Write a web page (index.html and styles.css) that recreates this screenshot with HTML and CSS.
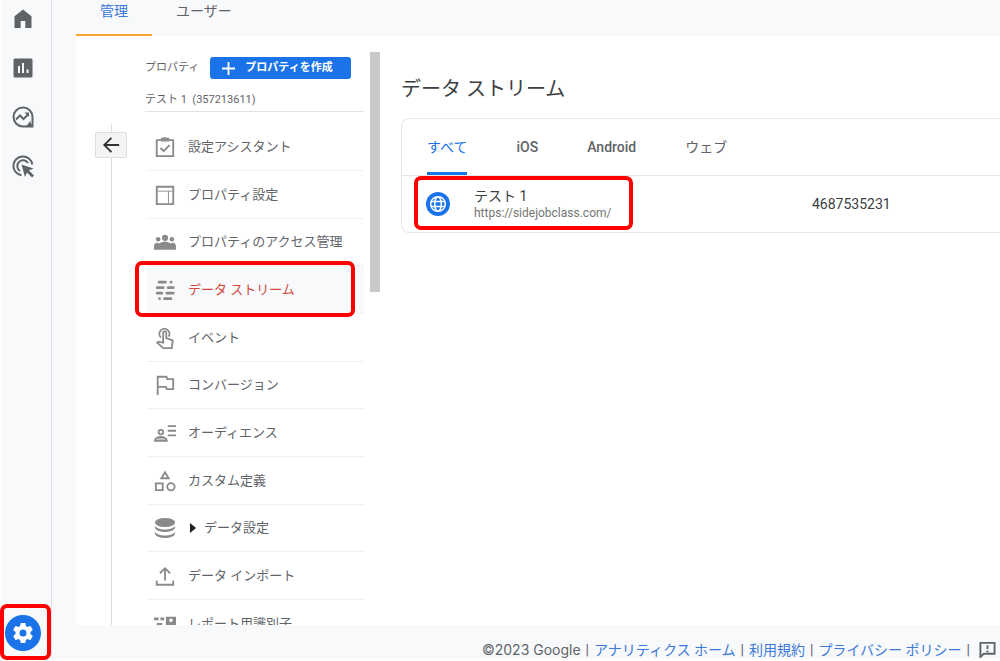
FILE: index.html
```html
<!DOCTYPE html>
<html lang="ja">
<head>
<meta charset="utf-8">
<title>管理 - データ ストリーム</title>
<link rel="stylesheet" href="styles.css">
</head>
<body>
<div class="app">
  <nav class="sidebar" aria-label="メイン">
    <button class="side-btn" aria-label="ホーム"><svg viewBox="0 0 24 24"><path d="M3.500 21V9.200L12 2.600l8.500 6.600V21h-6.200v-7H9.700v7z"/></svg></button>
    <button class="side-btn" aria-label="レポート"><svg viewBox="0 0 24 24"><path fill-rule="evenodd" d="M4 2.500h16a1.500 1.500 0 0 1 1.500 1.500v16a1.500 1.500 0 0 1-1.500 1.500H4A1.500 1.500 0 0 1 2.500 20V4A1.500 1.500 0 0 1 4 2.500zM7 10v7h2v-7zM11 7v10h2V7zM15.500 13.500V17h2v-3.500z"/></svg></button>
    <button class="side-btn" aria-label="探索"><svg viewBox="0 0 24 24" class="line"><path d="M21.500 12A9.500 9.500 0 1 0 12 21.500h9.500z"/><path d="M19 16a9 9 0 0 1-4 4.500l6.500 1z" class="solid"/><path d="M5 14.500l4-4 3.500 3.500 5-5"/><path d="M13.500 7.500H18V12z" class="solid"/></svg></button>
    <button class="side-btn" aria-label="広告"><svg viewBox="0 0 24 24" class="line"><path d="M10.500 21.300A9.500 9.500 0 1 1 21.300 10.500"/><path d="M9 17A5.800 5.800 0 1 1 17 9"/><path d="M10.500 10.500l12 4-4.500 2 5 5-2 2-5-5-2 4.500z" class="solid"/></svg></button>
    <div class="admin marked">
      <button class="gear" aria-label="管理"><svg viewBox="0 0 24 24"><path d="M19.430 12.980a7.800 7.800 0 0 0 0-1.960l2.110-1.650a.5.5 0 0 0 .12-.64l-2-3.460a.5.5 0 0 0-.61-.22l-2.490 1a7.300 7.300 0 0 0-1.690-.98l-.38-2.650A.5.5 0 0 0 14 2h-4a.5.5 0 0 0-.49.420l-.38 2.650a7.700 7.700 0 0 0-1.690.98l-2.490-1a.5.5 0 0 0-.61.220l-2 3.460a.5.5 0 0 0 .12.640l2.110 1.650a7.900 7.900 0 0 0 0 1.960l-2.110 1.650a.5.5 0 0 0-.12.640l2 3.460a.5.5 0 0 0 .61.220l2.490-1c.52.400 1.080.730 1.690.980l.38 2.650A.5.5 0 0 0 10 22h4a.5.5 0 0 0 .49-.42l.38-2.650a7.700 7.700 0 0 0 1.690-.98l2.490 1a.5.5 0 0 0 .61-.22l2-3.460a.5.5 0 0 0-.12-.64zM12 15.500a3.500 3.500 0 1 1 0-7 3.500 3.500 0 0 1 0 7z"/></svg></button>
    </div>
  </nav>

  <div class="page">
    <header class="tabs">
      <button class="tab tab-on">管理</button>
      <button class="tab">ユーザー</button>
    </header>

    <div class="panel">
      <div class="rail">
        <button class="back" aria-label="戻る"><svg viewBox="0 0 20 20"><path d="M19 10H3M10.500 2L2.500 10l8 8"/></svg></button>
      </div>

      <section class="property">
        <div class="prop-head">
          <span>プロパティ</span>
          <button class="create"><svg viewBox="0 0 14 14"><path d="M7 0v14M0 7h14"/></svg>プロパティを作成</button>
        </div>
        <div class="prop-name">テスト 1&nbsp; (357213611)</div>
        <ul class="menu">
          <li><a href="#"><svg viewBox="0 0 24 24" class="line"><path d="M3 4.500h18V22H3z"/><path d="M8.500 4V3h2a1.600 1.600 0 0 1 3 0h2v2h-7z"/><path d="M7 13l3.500 3.500L17 10"/></svg>設定アシスタント</a></li>
          <li><a href="#"><svg viewBox="0 0 24 24" class="line"><path d="M3 3h18v19H3z"/><path d="M4 7.800h16M15.800 8v13" class="thin"/></svg>プロパティ設定</a></li>
          <li><a href="#"><svg viewBox="0 0 24 24"><circle cx="12" cy="7.500" r="3.300"/><circle cx="4.500" cy="9" r="2.500"/><circle cx="19.500" cy="9" r="2.500"/><path d="M0 20.500v-4C0 13 4 12 6 13.500c3-2.500 9-2.500 12 0 2-1.500 6-.5 6 3v4z"/></svg>プロパティのアクセス管理</a></li>
          <li class="marked selected"><a href="#" aria-current="page"><svg viewBox="0 0 24 24" class="stream"><path d="M5.500 3.500h7M18.500 3.500h.1M3.500 9.500h6.500M15.500 9.500h5.500M3.500 15.500h5M14 15.500h7M6 21.500h.1M11.500 21.500H18.500"/></svg>データ ストリーム</a></li>
          <li><a href="#"><svg viewBox="0 0 24 24" class="line"><path d="M7.500 11.500A5.500 5.500 0 1 1 16 10.500"/><path d="M10 17V6.500a1.700 1.700 0 0 1 3.400 0V12l7 2.500-1 8.500H10l-6.500-6 1.500-1z"/></svg>イベント</a></li>
          <li><a href="#"><svg viewBox="0 0 24 24" class="line"><path d="M4 23V3h9.500l1 2.500H21v11h-7L13 14H4"/></svg>コンバージョン</a></li>
          <li><a href="#"><svg viewBox="0 0 24 24" class="line"><circle cx="7.500" cy="11" r="2.500"/><path d="M1 20.500c0-5.500 13-5.500 13 0z" class="tint"/><path d="M15 4.500h9M15 9.500h9M15 14.500h9"/></svg>オーディエンス</a></li>
          <li><a href="#"><svg viewBox="0 0 24 24" class="line"><path d="M12 2.500l4 6.500H8zM2 14.500h7.500V22H2z"/><circle cx="18.500" cy="18.300" r="4"/></svg>カスタム定義</a></li>
          <li><a href="#"><svg viewBox="0 0 24 24"><ellipse cx="12" cy="6" rx="11" ry="5"/><path d="M1 9.500c3 5.500 19 5.500 22 0v2c-1 6.500-21 6.500-22 0zM1 16c3 5.500 19 5.500 22 0v2c-1 6.500-21 6.500-22 0z"/></svg><span class="caret"></span>データ設定</a></li>
          <li><a href="#"><svg viewBox="0 0 24 24" class="line"><path d="M12 17V4M6.500 9L12 3.500 17.500 9M3 17v4.500h18V17"/></svg>データ インポート</a></li>
          <li><a href="#"><svg viewBox="0 0 24 24"><path d="M0 5h5v3H0zM7 5h4v3H7zM3 11h6v3H3zM0 17h5v3H0z"/><path fill-rule="evenodd" d="M13 4h11v16H13zM18.500 6a2 2 0 1 0 0 4 2 2 0 0 0 0-4zM16 15h5v-2h-5z"/></svg>レポート用識別子</a></li>
        </ul>
      </section>

      <div class="scroll"></div>

      <main class="main">
        <h1>データ ストリーム</h1>
        <div class="card">
          <div class="filters">
            <button class="filter filter-on">すべて</button>
            <button class="filter">iOS</button>
            <button class="filter">Android</button>
            <button class="filter">ウェブ</button>
          </div>
          <table class="streams">
            <tr>
              <td class="name-cell">
                <a class="stream-link marked" href="#">
                  <svg viewBox="0 0 24 24"><circle cx="12" cy="12" r="12" class="disc"/><g class="globe"><circle cx="12" cy="12" r="7.300"/><ellipse cx="12" cy="12" rx="3.300" ry="7.300"/><path d="M5 9.500h14M5 14.500h14"/></g></svg>
                  <span class="stream-text"><span class="stream-name">テスト 1</span><span class="stream-url">https://sidejobclass.com/</span></span>
                </a>
              </td>
              <td>4687535231</td>
            </tr>
          </table>
        </div>
      </main>
    </div>

    <footer class="footer">
      <span>©2023 Google</span><span>|</span><a href="#">アナリティクス ホーム</a><span>|</span><a href="#">利用規約</a><span>|</span><a href="#">プライバシー ポリシー</a><span>|</span>
      <button class="feedback" aria-label="フィードバック"><svg viewBox="0 0 18 18"><path d="M1.500 17V2h15v11.500H5zM9 4.500v4M9 10v1.800"/></svg></button>
    </footer>
  </div>
</div>
</body>
</html>
```
FILE: styles.css
```css
* { box-sizing: border-box; }

body {
  margin: 0;
  background: #fff;
  color: #5f6368;
  font: 14px/20px Roboto, "Noto Sans CJK JP", sans-serif;
}

button {
  margin: 0;
  padding: 0;
  border: 0;
  background: none;
  color: inherit;
  font: inherit;
}

a { color: inherit; text-decoration: none; }

svg { display: block; flex: none; fill: currentColor; }

.line { fill: none; stroke: currentColor; stroke-width: 2; }
.line .thin { stroke-width: 1; }
.line .tint { fill: #c4c4c4; }
.line .solid { fill: currentColor; stroke: none; }

.app {
  display: flex;
  height: 100vh;
  padding: 0 0 2px 2px;
  overflow: hidden;
}

/* Red callout frame drawn round an element */
.marked { position: relative; }
.marked::after {
  content: "";
  position: absolute;
  inset: 0;
  border: 4px solid #f00;
  border-radius: 7px;
  pointer-events: none;
}

.sidebar {
  display: flex;
  flex: none;
  flex-direction: column;
  align-items: center;
  gap: 25px;
  width: 50px;
  padding: 7px 7px 8px 0;
  border-right: 1px solid #dfe1e4;
  background: #f8f9fb;
}
.side-btn svg { width: 24px; height: 24px; }
.admin { margin-top: auto; }
.admin::after { inset: -11px -10px -9px -5px; }
.gear {
  display: grid;
  place-items: center;
  width: 36px;
  height: 36px;
  border-radius: 50%;
  background: #1a73e8;
  color: #fff;
}
.gear svg { width: 24px; height: 24px; }

.page {
  display: flex;
  flex: 1;
  flex-direction: column;
  min-width: 0;
  padding-left: 24px;
  background: #f8f9fb;
}

.tabs { display: flex; flex: none; height: 36px; }
.tab { padding: 0 24px 14px; }
.tab-on { border-bottom: 2px solid #f9a432; padding-bottom: 12px; color: #3b78d8; }

.panel {
  display: flex;
  flex: 1;
  min-height: 0;
  overflow: hidden;
  background: #fff;
}

.rail {
  flex: none;
  width: 69px;
  margin-top: 88px;
  padding: 8px 0 0 19px;
  background: linear-gradient(#dadce0, #dadce0) 35px 0 / 1px 100% no-repeat;
}
.back {
  display: grid;
  place-items: center;
  width: 32px;
  height: 26px;
  border: 1px solid #dedede;
  border-radius: 2px;
  background: #f4f4f4;
  color: #333;
}
.back svg { width: 18px; height: 18px; fill: none; stroke: currentColor; stroke-width: 2; }

.property { flex: none; width: 219px; padding-top: 21px; font-size: 11px; }
.prop-head { display: flex; align-items: center; gap: 11px; height: 22px; }
.create {
  display: flex;
  align-items: center;
  gap: 10px;
  height: 22px;
  padding: 0 18px 0 12px;
  border-radius: 3px;
  background: #1a73e8;
  color: #fff;
  font-weight: 700;
}
.create svg { width: 13px; height: 13px; stroke: currentColor; stroke-width: 2; }
.prop-name { padding: 11px 0 1px; border-bottom: 1px solid #dfe3e1; }

.menu { margin: 11px 0 0; padding: 0 0 0 2px; list-style: none; font-size: 13px; }
.menu li { height: 48px; border-bottom: 1px solid #f0f1f2; }
.menu li:nth-child(3n) { height: 47px; }
.menu a { display: flex; align-items: center; height: 100%; padding-left: 7px; white-space: nowrap; }
.menu svg { width: 22px; height: 22px; margin-right: 12px; color: #8a8a8a; }
.menu .stream { stroke: currentColor; stroke-width: 3; stroke-linecap: round; }
.menu .selected { background: #f8f9fb; color: #d04840; }
.menu .marked::after { inset: -5px 9px -4px -12px; }
.caret {
  margin: 0 8px 0 2px;
  border: 5px solid transparent;
  border-right: 0;
  border-left: 6px solid #202124;
}

.scroll { flex: none; width: 10px; height: 240px; margin: 16px 20px 0 6px; background: #c8c8c8; }

.main { flex: 1; min-width: 0; padding: 37px 0 0 1px; }
h1 { margin: 0; color: #3c4043; font-size: 20px; font-weight: 400; line-height: 32px; }

.card {
  margin-top: 13px;
  border: 1px solid #e4e6ea;
  border-right: 0;
  border-radius: 8px 0 0 8px;
}
.filters { display: flex; gap: 49px; height: 57px; padding-left: 25px; border-bottom: 1px solid #e4e6ea; }
.filter { border-top: 3px solid transparent; border-bottom: 3px solid transparent; font-weight: 500; }
.filter:first-child, .filter:last-child { font-weight: 400; }
.filter-on { border-bottom-color: #1a73e8; color: #1a73e8; }

.streams { width: 100%; border-collapse: collapse; table-layout: fixed; }
.streams td { height: 56px; padding: 0; color: #3c4043; }
.streams .name-cell { width: 410px; padding-left: 24px; }
.stream-link { display: inline-flex; align-items: center; gap: 24px; vertical-align: middle; }
.stream-link::after { inset: -11px -22px -9px -12px; }
.stream-link svg { width: 24px; height: 24px; }
.disc { fill: #1a73e8; }
.globe { fill: none; stroke: #fff; stroke-width: 1.5; }
.stream-text { display: grid; }
.stream-name { line-height: 18px; }
.stream-url { color: #757575; font-size: 12px; line-height: 16px; }

.footer {
  display: flex;
  flex: none;
  align-items: center;
  justify-content: flex-end;
  gap: 5px;
  height: 34px;
  padding: 15px 4px 0 0;
  white-space: nowrap;
}
.footer span:first-child { font-family: Inter, sans-serif; }
.footer a { color: #3b78d8; }
.feedback { margin-left: 4px; }
.feedback svg { width: 17px; height: 17px; fill: none; stroke: currentColor; stroke-width: 2; }
```
